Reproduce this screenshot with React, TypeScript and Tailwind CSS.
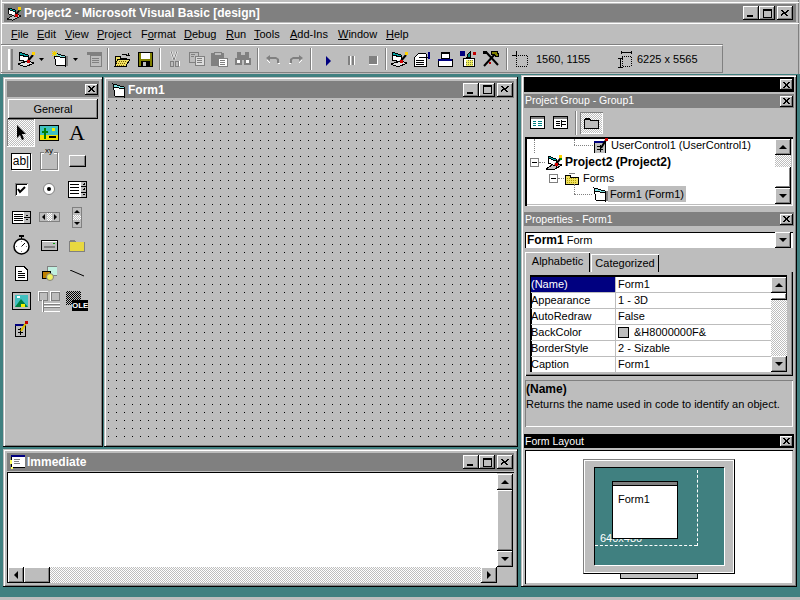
import React from "react";

const RAISED = "shadow-[inset_-1px_-1px_0_#000,inset_1px_1px_0_#fff,inset_-2px_-2px_0_#808080]";
const PANEL = "shadow-[inset_-1px_-1px_0_#000,inset_1px_1px_0_#bdbdbd,inset_2px_2px_0_#fff,inset_-2px_-2px_0_#808080]";
const FONT = "font-['Liberation_Sans',sans-serif]";

type P = { className?: string };
const Svg = ({ w, h, className, children, vw, vh }: { w: number; h: number; className?: string; children: React.ReactNode; vw?: number; vh?: number }) => (
  <svg width={w} height={h} viewBox={`0 0 ${vw ?? w} ${vh ?? h}`} shapeRendering="crispEdges" className={`shrink-0 block ${className ?? ""}`}>
    {children}
  </svg>
);

const Arrow = ({ d }: { d: "u" | "d" | "l" | "r" }) => {
  const pts = { u: "4,0 0,4 8,4", d: "0,0 8,0 4,4", l: "4,0 0,4 4,8", r: "0,0 4,4 0,8" }[d];
  const v = d === "u" || d === "d";
  return (
    <Svg w={v ? 8 : 4} h={v ? 4 : 8}>
      <polygon points={pts} fill="#000" shapeRendering="auto" />
    </Svg>
  );
};

const ScrollBtn = ({ d, className }: { d: "u" | "d" | "l" | "r"; className?: string }) => (
  <div className={`w-[16px] h-[16px] shrink-0 flex items-center justify-center bg-[#bdbdbd] ${RAISED} ${className ?? ""}`}>
    <Arrow d={d} />
  </div>
);

const XGlyph = () => (
  <Svg w={8} h={7}>
    <path d="M0 0h2v1h1v1h2v-1h1v-1h2v1h-1v1h-1v1h-1v1h1v1h1v1h-2v-1h-1v-1h-2v1h-1v1h-2v-1h1v-1h1v-1h1v-1h-1v-1h-1z" fill="#000" />
  </Svg>
);

const MiniX = ({ className }: P) => (
  <div className={`w-[13px] h-[11px] flex items-center justify-center bg-[#bdbdbd] shrink-0 ${RAISED} ${className ?? ""}`}>
    <Svg w={7} h={6}>
      <path d="M0 0h2v1h1v1h1v-1h1v-1h2v1h-1v1h-1v2h1v1h1v1h-2v-1h-1v-1h-1v1h-1v1h-2v-1h1v-1h1v-2h-1v-1h-1z" fill="#000" />
    </Svg>
  </div>
);

const Caption = () => (
  <div className="flex items-center shrink-0">
    <div className={`w-[16px] h-[14px] bg-[#bdbdbd] flex items-end pb-[3px] pl-[4px] ${RAISED}`}>
      <div className="w-[6px] h-[2px] bg-black" />
    </div>
    <div className={`w-[16px] h-[14px] bg-[#bdbdbd] flex items-center justify-center ${RAISED}`}>
      <div className="w-[9px] h-[9px] border border-black border-t-2" />
    </div>
    <div className={`w-[16px] h-[14px] ml-[2px] bg-[#bdbdbd] flex items-center justify-center ${RAISED}`}>
      <XGlyph />
    </div>
  </div>
);

/* ---------- drawn icons ---------- */
const ProjectIcon = ({ className, w = 18, h = 17 }: P & { w?: number; h?: number }) => (
  <Svg w={w} h={h} vw={18} vh={17} className={className}>
    <polygon points="1,15 8,16 17,11 10,9" fill="#c0c0c0" stroke="#000" />
    <polygon points="3,2 11,5 11,12 3,9" fill="#fff" stroke="#000" />
    <polygon points="3,2 11,5 11,7 3,4" fill="#00c0c0" stroke="#000" />
    <path d="M10 11l6-7" stroke="#000" strokeWidth="2" shapeRendering="auto" />
    <rect x="14" y="1" width="3" height="3" fill="#ffd000" />
    <rect x="10" y="9" width="3" height="3" fill="#d00000" />
    <rect x="15" y="4" width="2" height="2" fill="#008000" />
  </Svg>
);
const FormIcon = ({ className, sun }: P & { sun?: boolean }) => (
  <Svg w={16} h={16} className={className}>
    <rect x="13" y="5" width="3" height="10" fill="#808080" />
    <polygon points="2,2 13,5 13,15 4,14" fill="#fff" stroke="#000" />
    <polygon points="2,2 13,5 13,7 3,5" fill="#80e0e0" stroke="#000" />
    {sun && <path d="M2 0v5M0 2h5M0 0l5 5M5 0l-5 5" stroke="#f0d000" strokeWidth="1" />}
  </Svg>
);
const OpenIcon = ({ className }: P) => (
  <Svg w={17} h={15} className={className}>
    <path d="M1 4h5v2h6v8H1z" fill="#f0e060" stroke="#000" />
    <polygon points="1,14 4,7 16,7 12,14" fill="#f0e060" stroke="#000" />
    <path d="M2 10h2M5 9h8M4 11h7M3 13h7" stroke="#806000" strokeDasharray="1 1" />
    <path d="M8 2h3l2 0M14 1v3M12 3h4" stroke="#000" />
  </Svg>
);
const SaveIcon = ({ className }: P) => (
  <Svg w={15} h={15} className={className}>
    <rect x="0" y="0" width="15" height="15" fill="#000" />
    <rect x="1" y="1" width="13" height="13" fill="#808000" />
    <rect x="3" y="1" width="9" height="6" fill="#fff" />
    <rect x="3" y="9" width="9" height="5" fill="#000" />
    <rect x="5" y="10" width="3" height="4" fill="#bdbdbd" />
  </Svg>
);
const CutIcon = ({ className }: P) => (
  <Svg w={11} h={16} className={className}>
    <path d="M2 0l3 9M8 0l-3 9" stroke="#fff" strokeWidth="2" shapeRendering="auto" />
    <path d="M2 0l3 9M8 0l-3 9" stroke="#808080" shapeRendering="auto" />
    <rect x="1" y="10" width="3" height="5" fill="none" stroke="#808080" />
    <rect x="6" y="10" width="3" height="5" fill="none" stroke="#808080" />
    <path d="M10 10v5M5 16h5" stroke="#fff" />
  </Svg>
);
const CopyIcon = ({ className }: P) => (
  <Svg w={16} h={14} className={className}>
    <rect x="0" y="0" width="9" height="10" fill="#bdbdbd" stroke="#808080" />
    <rect x="6" y="4" width="9" height="9" fill="#dcdcdc" stroke="#808080" />
    <path d="M8 6h5M8 8h5M8 10h5M2 2h4M2 4h3" stroke="#808080" />
  </Svg>
);
const PasteIcon = ({ className }: P) => (
  <Svg w={17} h={15} className={className}>
    <rect x="0" y="1" width="13" height="13" fill="#808080" />
    <rect x="3" y="0" width="7" height="3" fill="#bdbdbd" stroke="#808080" />
    <rect x="7" y="6" width="9" height="8" fill="#fff" stroke="#808080" />
    <path d="M9 8h5M9 10h5M9 12h5" stroke="#808080" />
  </Svg>
);
const FindIcon = ({ className }: P) => (
  <Svg w={16} h={14} className={className}>
    <rect x="0" y="6" width="7" height="7" fill="#808080" />
    <rect x="9" y="6" width="7" height="7" fill="#808080" />
    <rect x="2" y="0" width="4" height="7" fill="#808080" />
    <rect x="10" y="0" width="4" height="7" fill="#808080" />
    <rect x="6" y="3" width="4" height="5" fill="#808080" />
    <rect x="2" y="8" width="3" height="3" fill="#fff" />
    <rect x="11" y="8" width="3" height="3" fill="#fff" />
  </Svg>
);
const UndoIcon = ({ className, flip }: P & { flip?: boolean }) => (
  <Svg w={14} h={9} className={`${flip ? "-scale-x-100" : ""} ${className ?? ""}`}>
    <path d="M0 3l4-3v2h6l3 2v4h-2v-3l-1-1H4v2z" fill="#808080" shapeRendering="auto" />
    <path d="M1 5l3 3M12 8h2" stroke="#fff" />
  </Svg>
);
const PlanIcon = ({ className }: P) => (
  <Svg w={18} h={17} className={className}>
    <polygon points="0,13 7,16 16,12 10,10" fill="#e0e0e0" stroke="#000" />
    <polygon points="1,1 10,4 10,11 1,9" fill="#fff" stroke="#000" />
    <polygon points="1,1 10,4 10,6 1,4" fill="#00a0a0" stroke="#000" />
    <path d="M9 11l6-7" stroke="#000" strokeWidth="2" shapeRendering="auto" />
    <rect x="14" y="1" width="3" height="3" fill="#ffd000" />
    <rect x="9" y="9" width="3" height="3" fill="#d00000" />
  </Svg>
);
const PropsIcon = ({ className }: P) => (
  <Svg w={16} h={15} className={className}>
    <polygon points="0,6 5,1 12,2 12,14 0,14" fill="#fff" stroke="#000" />
    <path d="M2 8h8M2 10h8M2 12h8" stroke="#000" />
    <path d="M5 5h9" stroke="#000" />
    <rect x="14" y="0" width="2" height="7" fill="#000080" />
  </Svg>
);
const LayoutIcon = ({ className }: P) => (
  <Svg w={15} h={15} className={className}>
    <rect x="3" y="0" width="8" height="6" fill="#fff" stroke="#000" />
    <rect x="3" y="0" width="8" height="2" fill="#000" />
    <rect x="0" y="7" width="14" height="7" fill="#fff" stroke="#000" />
    <rect x="0" y="7" width="14" height="2" fill="#000080" />
  </Svg>
);
const BrowserIcon = ({ className }: P) => (
  <Svg w={16} h={16} className={className}>
    <rect x="0" y="0" width="5" height="5" fill="#000080" />
    <rect x="13" y="1" width="3" height="3" fill="#c00000" />
    <polygon points="8,3 10,1 10,6 7,6" fill="#008080" stroke="#000" />
    <rect x="3" y="7" width="11" height="8" fill="#fff" stroke="#000" />
    <rect x="6" y="9" width="7" height="6" fill="#f0f060" />
    <path d="M6 11h7M6 13h7M8 9v6M10 9v6M12 9v6" stroke="#808040" strokeDasharray="1 1" />
  </Svg>
);
const ToolsIcon = ({ className }: P) => (
  <Svg w={16} h={16} className={className}>
    <path d="M1 15L12 3" stroke="#000" strokeWidth="2" shapeRendering="auto" />
    <path d="M3 1l12 13" stroke="#000" strokeWidth="2" shapeRendering="auto" />
    <polygon points="8,1 14,0 16,5 13,6 11,3 8,3" fill="#808000" stroke="#000" />
    <rect x="0" y="0" width="4" height="3" fill="#000" />
    <rect x="6" y="11" width="2" height="2" fill="#c00000" />
  </Svg>
);
const PosIcon = ({ className }: P) => (
  <Svg w={16} h={16} className={className}>
    <path d="M0 4h4M4 0v4" stroke="#000" />
    <rect x="4" y="4" width="11" height="11" fill="none" stroke="#000" strokeDasharray="1 1" />
  </Svg>
);
const SizeIcon = ({ className }: P) => (
  <Svg w={16} h={17} className={className}>
    <path d="M5 1h10M5 0v3M15 0v3M2 7h5M2 16h5M4 7v9" stroke="#000" />
    <rect x="6" y="5" width="9" height="10" fill="none" stroke="#000" strokeDasharray="1 1" />
  </Svg>
);
const Drop = ({ className }: P) => (
  <Svg w={5} h={3} className={className}>
    <polygon points="0,0 5,0 2.5,3" fill="#000" shapeRendering="auto" />
  </Svg>
);
const Sep = ({ className }: P) => <div className={`w-[2px] h-[22px] bg-[#808080] border-r border-white shrink-0 ${className ?? ""}`} />;

/* ---------- toolbox glyphs ---------- */
const tb = {
  pointer: (
    <Svg w={10} h={16}><polygon points="1,0 1,13 4,10 6,15 8,14 6,9 10,9" fill="#000" shapeRendering="auto" /></Svg>
  ),
  picture: (
    <Svg w={20} h={16}>
      <rect width="20" height="16" fill="#000" />
      <rect x="1" y="1" width="18" height="14" fill="#40c0c0" />
      <rect x="1" y="10" width="18" height="5" fill="#f0e000" />
      <rect x="5" y="3" width="2" height="11" fill="#008000" />
      <rect x="3" y="6" width="6" height="2" fill="#008000" />
      <rect x="13" y="3" width="3" height="3" fill="#f0f000" />
      <rect x="10" y="11" width="7" height="2" fill="#000" />
    </Svg>
  ),
  frame: (
    <div className="w-[18px] h-[18px] border border-[#808080] shadow-[1px_1px_0_#fff,inset_1px_1px_0_#fff] relative">
      <span className="absolute -top-[6px] left-[3px] text-[8px] leading-[8px] bg-[#bdbdbd] px-[1px] font-['Liberation_Sans',sans-serif]">xy</span>
    </div>
  ),
  command: <div className="w-[17px] h-[12px] bg-[#bdbdbd] border border-t-white border-l-white border-r-black border-b-black shadow-[inset_-1px_-1px_0_#808080]" />,
  check: (
    <Svg w={13} h={13}>
      <rect width="13" height="13" fill="#808080" />
      <rect x="1" y="1" width="12" height="12" fill="#fff" />
      <rect x="1" y="1" width="11" height="11" fill="#000" />
      <rect x="2" y="2" width="10" height="10" fill="#fff" />
      <path d="M3 6l2 3 5-5" stroke="#000" strokeWidth="2" fill="none" shapeRendering="auto" />
    </Svg>
  ),
  option: (
    <Svg w={12} h={12}>
      <circle cx="6" cy="6" r="5.5" fill="#fff" stroke="#808080" shapeRendering="auto" />
      <circle cx="6" cy="6" r="2" fill="#000" shapeRendering="auto" />
    </Svg>
  ),
  combo: (
    <Svg w={19} h={17}>
      <rect width="19" height="17" fill="#000" />
      <rect x="1" y="1" width="17" height="15" fill="#fff" />
      <path d="M2 3h9M2 6h9M2 9h9M2 12h9" stroke="#000" />
      <rect x="13" y="1" width="5" height="15" fill="#bdbdbd" />
      <path d="M15 3h2M15 8h2M15 13h2M16 2v1M16 7v2M16 13v1M13 5h5M13 11h5" stroke="#000" />
    </Svg>
  ),
  list: (
    <Svg w={19} h={13}>
      <rect width="19" height="13" fill="#000" />
      <rect x="1" y="1" width="17" height="11" fill="#fff" />
      <path d="M2 3h9M2 5h9M2 7h9M2 9h9" stroke="#000" />
      <rect x="12" y="1" width="6" height="11" fill="#bdbdbd" />
      <path d="M14 4h2M14 8h2M12 6h6" stroke="#000" />
    </Svg>
  ),
  hscroll: (
    <div className="flex h-[10px] w-[21px] border border-[#808080] bg-white shadow-[inset_1px_1px_0_#fff]">
      <div className="w-[7px] bg-[#bdbdbd] flex items-center justify-center"><div className="w-0 h-0 border-y-[3px] border-y-transparent border-r-[3px] border-r-black" /></div>
      <div className="flex-1 bg-[repeating-conic-gradient(#bdbdbd_0_25%,#fff_0_50%)] bg-[length:2px_2px]" />
      <div className="w-[7px] bg-[#bdbdbd] flex items-center justify-center"><div className="w-0 h-0 border-y-[3px] border-y-transparent border-l-[3px] border-l-black" /></div>
    </div>
  ),
  vscroll: (
    <div className="flex flex-col w-[10px] h-[21px] border border-[#808080] bg-white">
      <div className="h-[7px] bg-[#bdbdbd] flex items-center justify-center"><div className="w-0 h-0 border-x-[3px] border-x-transparent border-b-[3px] border-b-black" /></div>
      <div className="flex-1 bg-[repeating-conic-gradient(#bdbdbd_0_25%,#fff_0_50%)] bg-[length:2px_2px]" />
      <div className="h-[7px] bg-[#bdbdbd] flex items-center justify-center"><div className="w-0 h-0 border-x-[3px] border-x-transparent border-t-[3px] border-t-black" /></div>
    </div>
  ),
  timer: (
    <Svg w={17} h={20}>
      <rect x="6" y="0" width="5" height="2" fill="#000" />
      <rect x="8" y="2" width="1" height="2" fill="#000" />
      <circle cx="8.5" cy="11.5" r="7.5" fill="#fff" stroke="#000" strokeWidth="1.5" shapeRendering="auto" />
      <path d="M8.5 11.5L12 8" stroke="#000" shapeRendering="auto" />
      <path d="M8 6h1M3 11h1M13 11h1M8 16h1" stroke="#808080" />
    </Svg>
  ),
  drive: (
    <Svg w={17} h={11}>
      <rect width="17" height="11" fill="#000" />
      <rect x="1" y="1" width="15" height="9" fill="#bdbdbd" />
      <rect x="1" y="1" width="15" height="1" fill="#fff" />
      <rect x="3" y="6" width="11" height="2" fill="#808080" />
      <rect x="12" y="3" width="2" height="1" fill="#00a000" />
    </Svg>
  ),
  folder: (
    <Svg w={16} h={13}>
      <path d="M0 2h1v-1h5v1h1v1h9v10H0z" fill="#808080" />
      <rect x="1" y="3" width="14" height="9" fill="#e8d840" />
    </Svg>
  ),
  file: (
    <Svg w={13} h={15}>
      <path d="M0 0h9l4 4v11H0z" fill="#000" />
      <path d="M1 1h7l4 4v9H1z" fill="#fff" />
      <path d="M3 5h4M3 7h7M3 9h7M3 11h7" stroke="#000" />
    </Svg>
  ),
  shape: (
    <Svg w={15} h={15}>
      <rect x="5" y="0" width="10" height="9" fill="#c0f0e0" stroke="#808080" />
      <rect x="0" y="5" width="8" height="7" fill="#c08000" stroke="#000" />
      <circle cx="8" cy="11" r="3.5" fill="#f0f060" stroke="#808080" shapeRendering="auto" />
    </Svg>
  ),
  line: (
    <Svg w={15} h={7}>
      <path d="M0 0l14 6" stroke="#000" shapeRendering="auto" />
    </Svg>
  ),
  image: (
    <Svg w={19} h={18}>
      <rect width="19" height="18" fill="#000" />
      <rect x="1" y="1" width="17" height="16" fill="#bdbdbd" />
      <rect x="3" y="3" width="13" height="12" fill="#40c0c0" />
      <polygon points="3,15 9,7 16,15" fill="#008040" shapeRendering="auto" />
      <rect x="9" y="12" width="4" height="3" fill="#f0f000" />
      <rect x="5" y="4" width="3" height="2" fill="#fff" />
    </Svg>
  ),
  grid: (
    <Svg w={22} h={21}>
      <rect x="0" y="0" width="9" height="9" fill="#bdbdbd" stroke="#fff" />
      <rect x="1" y="1" width="8" height="8" fill="none" stroke="#808080" />
      <rect x="12" y="0" width="9" height="9" fill="#bdbdbd" stroke="#fff" />
      <rect x="13" y="1" width="8" height="8" fill="none" stroke="#808080" />
      <path d="M4 9v11M4 12h18M4 15h18M4 20h18" stroke="#fff" />
      <path d="M5 10v11M5 13h17M5 16h17M5 21h17" stroke="#808080" />
    </Svg>
  ),
  uc: (
    <Svg w={13} h={16}>
      <rect x="0" y="3" width="10" height="12" fill="#bdbdbd" stroke="#000" />
      <rect x="0" y="3" width="10" height="2" fill="#000080" />
      <path d="M3 8h5M3 11h5M5 7v7" stroke="#000" />
      <path d="M6 10l5-8" stroke="#e0c000" strokeWidth="2" shapeRendering="auto" />
      <rect x="10" y="0" width="3" height="3" fill="#c00000" />
    </Svg>
  ),
};

const TCell = ({ children, sel }: { children: React.ReactNode; sel?: boolean }) => (
  <div className={`w-[28px] h-[28px] flex items-center justify-center relative ${sel ? "bg-[repeating-conic-gradient(#bdbdbd_0_25%,#fff_0_50%)] bg-[length:2px_2px] shadow-[inset_-1px_-1px_0_#fff,inset_1px_1px_0_#808080]" : ""}`}>
    {children}
  </div>
);

const Toolbox = () => (
  <div className={`w-[100px] h-full bg-[#bdbdbd] p-[4px] shrink-0 flex flex-col ${PANEL}`}>
    <div className="h-[16px] bg-[#808080] flex items-center justify-end pr-[1px] shrink-0">
      <MiniX />
    </div>
    <div className={`h-[20px] mt-[2px] mx-[1px] flex items-center justify-center text-[11px] shrink-0 ${RAISED}`}>General</div>
    <div className="grid grid-cols-[28px_28px_28px] auto-rows-[28px]">
      <TCell sel>{tb.pointer}</TCell>
      <TCell>{tb.picture}</TCell>
      <TCell><span className="font-['Liberation_Serif',serif] text-[22px] leading-none">A</span></TCell>
      <TCell>
        <div className="w-[20px] h-[17px] bg-white border border-black shadow-[1px_1px_0_#fff] flex items-center justify-center text-[12px] leading-none">ab|</div>
      </TCell>
      <TCell>{tb.frame}</TCell>
      <TCell>{tb.command}</TCell>
      <TCell>{tb.check}</TCell>
      <TCell>{tb.option}</TCell>
      <TCell>{tb.combo}</TCell>
      <TCell>{tb.list}</TCell>
      <TCell>{tb.hscroll}</TCell>
      <TCell>{tb.vscroll}</TCell>
      <TCell>{tb.timer}</TCell>
      <TCell>{tb.drive}</TCell>
      <TCell>{tb.folder}</TCell>
      <TCell>{tb.file}</TCell>
      <TCell>{tb.shape}</TCell>
      <TCell>{tb.line}</TCell>
      <TCell>{tb.image}</TCell>
      <TCell>{tb.grid}</TCell>
      <TCell>
        <div className="relative w-[22px] h-[20px]">
          <div className="w-[15px] h-[14px] bg-[repeating-conic-gradient(#000_0_25%,#bdbdbd_0_50%)] bg-[length:2px_2px]" />
          <span className="absolute right-0 bottom-0 w-[16px] h-[11px] bg-black text-white font-['Liberation_Sans',sans-serif] font-bold text-[8px] leading-[11px] text-center">OLE</span>
        </div>
      </TCell>
      <TCell>{tb.uc}</TCell>
    </div>
  </div>
);

const FormWindow = () => (
  <div className={`flex-1 h-full bg-[#bdbdbd] p-[4px] flex flex-col ${PANEL}`}>
    <div className="h-[17px] bg-[#808080] flex items-center pl-[3px] pr-[1px] shrink-0">
      <FormIcon />
      <span className="ml-[1px] text-white font-bold text-[12px] flex-1">Form1</span>
      <Caption />
    </div>
    <div className="flex-1 bg-[linear-gradient(to_bottom,#bdbdbd_7px,transparent_7px),linear-gradient(to_right,#000_1px,#bdbdbd_1px)] bg-[length:8px_8px] bg-[position:0_3px]" />
  </div>
);

const Immediate = () => (
  <div className={`h-[138px] bg-[#bdbdbd] p-[4px] flex flex-col ${PANEL}`}>
    <div className="h-[18px] bg-[#808080] flex items-center pl-[3px] pr-[1px] shrink-0">
      <Svg w={15} h={15}>
        <rect x="1" y="0" width="14" height="12" fill="#fff" stroke="#000" />
        <rect x="1" y="0" width="14" height="2" fill="#000080" />
        <path d="M4 4h6M4 6h5M4 8h6" stroke="#808080" />
        <rect x="0" y="5" width="2" height="4" fill="#ffff60" />
        <rect x="1" y="12" width="2" height="2" fill="#ffff60" />
      </Svg>
      <span className="ml-[2px] text-white font-bold text-[12px] flex-1">Immediate</span>
      <Caption />
    </div>
    <div className="flex-1 mt-[1px] flex flex-col shadow-[inset_1px_1px_0_#000]">
      <div className="flex flex-1 min-h-0 pl-[1px] pt-[1px]">
        <div className="flex-1 bg-white" />
        <div className="w-[16px] flex flex-col pt-[1px] mr-[1px]">
          <ScrollBtn d="u" />
          <div className={`flex-1 ${RAISED}`} />
          <ScrollBtn d="d" />
        </div>
      </div>
      <div className="flex h-[16px] shrink-0 pl-[1px] pr-[1px]">
        <ScrollBtn d="l" />
        <div className={`w-[26px] shrink-0 ${RAISED}`} />
        <div className="flex-1 bg-[repeating-conic-gradient(#bdbdbd_0_25%,#fff_0_50%)] bg-[length:2px_2px]" />
        <ScrollBtn d="r" />
        <div className="w-[16px]" />
      </div>
    </div>
  </div>
);

const Box = ({ className }: P) => (
  <div className={`w-[9px] h-[9px] border border-[#808080] bg-white flex items-center justify-center shrink-0 ${className ?? ""}`}>
    <div className="w-[5px] h-[1px] bg-black" />
  </div>
);

const Tree = () => (
  <div className={`h-[69px] mx-[1px] flex bg-white shadow-[inset_2px_2px_0_#000,inset_-1px_-1px_0_#fff,inset_-2px_-2px_0_#bdbdbd] px-[2px] pb-[2px] overflow-hidden ${FONT}`}>
    <div className="flex-1 flex flex-col text-[11px] leading-[16px] min-w-0 overflow-hidden">
      <div className="h-[16px] flex items-center relative">
        <div className="absolute left-[7px] top-[2px] h-[14px] border-l border-dotted border-[#808080]" />
        <div className="absolute left-[47px] top-[2px] h-[6px] border-l border-dotted border-[#808080]" />
        <div className="ml-[47px] w-[19px] border-t border-dotted border-[#808080]" />
        <Svg w={15} h={15}>
          <rect x="1" y="3" width="11" height="12" fill="#bdbdbd" stroke="#000" />
          <rect x="1" y="3" width="11" height="2" fill="#000080" />
          <path d="M4 8h6M4 11h6M7 7v7" stroke="#000" />
          <path d="M8 10l5-8" stroke="#000" strokeWidth="2" shapeRendering="auto" />
          <rect x="12" y="0" width="3" height="3" fill="#c00000" />
        </Svg>
        <span className="ml-[3px] whitespace-nowrap">UserControl1 (UserControl1)</span>
      </div>
      <div className="h-[16px] flex items-center mt-[1px]">
        <Box className="ml-[3px]" />
        <div className="w-[6px] border-t border-dotted border-[#808080]" />
        <ProjectIcon />
        <span className="ml-[2px] font-bold whitespace-nowrap text-[12px]">Project2 (Project2)</span>
      </div>
      <div className="h-[16px] flex items-center">
        <Box className="ml-[22px]" />
        <div className="w-[6px] border-t border-dotted border-[#808080]" />
        <Svg w={16} h={13}>
          <path d="M1 3h5v2h8v7H1z" fill="#f0e060" stroke="#000" />
          <path d="M5 1h6" stroke="#808080" />
          <path d="M3 6h10M3 8h10M3 10h10" stroke="#b0a000" strokeDasharray="1 1" />
        </Svg>
        <span className="ml-[3px] whitespace-nowrap">Forms</span>
      </div>
      <div className="h-[16px] flex items-center relative">
        <div className="absolute left-[47px] -top-[2px] h-[10px] border-l border-dotted border-[#808080]" />
        <div className="ml-[47px] w-[18px] border-t border-dotted border-[#808080]" />
        <FormIcon />
        <span className="px-[2px] bg-[#bdbdbd] whitespace-nowrap">Form1 (Form1)</span>
      </div>
    </div>
    <div className="w-[16px] flex flex-col shrink-0 mt-[2px]">
      <ScrollBtn d="u" />
      <div className="h-[12px] bg-[repeating-conic-gradient(#bdbdbd_0_25%,#fff_0_50%)] bg-[length:2px_2px]" />
      <div className={`h-[21px] ${RAISED}`} />
      <ScrollBtn d="d" />
    </div>
  </div>
);

const rows: [string, React.ReactNode][] = [
  ["(Name)", "Form1"],
  ["Appearance", "1 - 3D"],
  ["AutoRedraw", "False"],
  [
    "BackColor",
    <span key="c" className="flex items-center">
      <span className="w-[11px] h-[11px] border border-black bg-[#bdbdbd] mr-[5px]" />&amp;H8000000F&amp;
    </span>,
  ],
  ["BorderStyle", "2 - Sizable"],
  ["Caption", "Form1"],
];

const Props = () => (
  <div className="h-[104px] mx-[1px] bg-[#bdbdbd] p-[3px] pl-[5px] pr-[6px] shadow-[inset_1px_0_0_#fff,inset_-1px_-1px_0_#000,inset_-2px_-2px_0_#808080]">
    <div className="h-[97px] flex bg-white shadow-[inset_2px_2px_0_#000] pl-[1px] pt-[2px] overflow-hidden">
      <div className="flex-1 flex flex-col min-w-0">
        {rows.map(([k, v], i) => (
          <div key={k} className="h-[16px] flex text-[11px] leading-[15px] shrink-0">
            <div className={`w-[85px] border-r border-b border-[#bdbdbd] ${i === 0 ? "bg-[#000080] text-white" : ""}`}>{k}</div>
            <div className="flex-1 border-b border-[#bdbdbd] pl-[2px]">{v}</div>
          </div>
        ))}
      </div>
      <div className="w-[16px] flex flex-col shrink-0">
        <ScrollBtn d="u" />
        <div className={`h-[7px] shrink-0 ${RAISED}`} />
        <div className="flex-1 bg-[repeating-conic-gradient(#bdbdbd_0_25%,#fff_0_50%)] bg-[length:2px_2px]" />
        <ScrollBtn d="d" />
      </div>
    </div>
  </div>
);

const Monitor = () => (
  <div className="flex flex-col items-center w-[152px]">
    <div className="w-[152px] h-[115px] bg-[#bdbdbd] border border-t-[#808080] border-l-[#808080] border-r-black border-b-black shadow-[inset_1px_1px_0_#fff,inset_-1px_-1px_0_#fff] px-[10px] py-[7px]">
      <div className="relative w-[130px] h-[98px] overflow-hidden bg-[#408080] border-t border-l border-[#000] shadow-[1px_1px_0_#fff]">
        <div className="absolute left-[0px] top-[77px] w-[102px] border-b border-dashed border-white" />
        <div className="absolute left-[102px] top-[2px] h-[76px] border-r border-dashed border-white" />
        <span className="absolute left-[5px] top-[63px] text-white text-[11px] leading-[14px]">640x480</span>
        <div className="absolute left-[17px] top-[13px] w-[66px] h-[58px] bg-white border border-black">
          <div className="h-[4px] bg-[#808080] border-b border-black" />
          <div className="pl-[5px] pt-[6px] text-[11px] leading-[14px]">Form1</div>
        </div>
      </div>
    </div>
    <div className="w-[78px] h-[5px] bg-[#bdbdbd] border-l border-r border-b border-black" />
  </div>
);

const RightColumn = () => (
  <div className={`w-[276px] h-[512px] shrink-0 bg-[#bdbdbd] px-[3px] pt-[2px] flex flex-col ${PANEL}`}>
    <div className="h-[15px] bg-black flex items-center justify-end pr-[1px] shrink-0"><MiniX /></div>
    <div className="h-[14px] mt-[2px] bg-[#808080] flex items-center pr-[1px] shrink-0">
      <span className="flex-1 pl-[1px] pb-[2px] text-white text-[10.5px] leading-none">Project Group - Group1</span>
      <MiniX />
    </div>
    <div className="h-[29px] flex items-center shrink-0 pl-[6px]">
      <Svg w={15} h={13}>
        <rect x="0" y="0" width="15" height="13" fill="#000" />
        <rect x="1" y="1" width="13" height="2" fill="#808080" />
        <rect x="1" y="3" width="13" height="9" fill="#fff" />
        <path d="M3 5h3M3 7h3M3 9h3M8 5h4M8 7h4M8 9h4" stroke="#008080" />
      </Svg>
      <Svg w={15} h={13} className="ml-[8px]">
        <rect x="0" y="0" width="15" height="13" fill="#000" />
        <rect x="1" y="1" width="13" height="2" fill="#808080" />
        <rect x="1" y="3" width="13" height="9" fill="#fff" />
        <path d="M3 5h4M3 7h4M3 9h4M9 5h4M9 8h4M8 4v7" stroke="#000" />
      </Svg>
      <Sep className="ml-[7px] h-[24px]" />
      <div className="ml-[3px] w-[23px] h-[22px] flex items-center justify-center bg-[repeating-conic-gradient(#bdbdbd_0_25%,#fff_0_50%)] bg-[length:2px_2px] shadow-[inset_1px_1px_0_#808080,inset_-1px_-1px_0_#fff]">
        <Svg w={15} h={12}>
          <path d="M0 2h1v-1h5v1h1v1h8v9H0z" fill="#000" />
          <path d="M1 3h5v1h8v7H1z" fill="#bdbdbd" />
        </Svg>
      </div>
    </div>
    <Tree />
    <div className="h-[14px] mt-[6px] bg-[#808080] flex items-center pr-[1px] shrink-0">
      <span className="flex-1 pl-[1px] text-white text-[10.5px] leading-none">Properties - Form1</span>
      <MiniX />
    </div>
    <div className="h-[16px] mt-[6px] mx-[1px] bg-white shadow-[inset_1px_1px_0_#000] flex items-center pl-[2px] pr-[2px] shrink-0">
      <span className="flex-1 text-[11px] leading-none pb-[1px]"><b className="text-[12px] mr-[3px]">Form1</b>Form</span>
      <ScrollBtn d="d" className="w-[15px] h-[14px]" />
    </div>
    <div className="h-[20px] mt-[4px] flex items-end text-[11px] shrink-0 pl-[1px]">
      <div className="w-[65px] h-[20px] pb-[2px] flex items-center justify-center bg-[#bdbdbd] shadow-[inset_1px_1px_0_#fff,inset_-1px_0_0_#000]">Alphabetic</div>
      <div className="w-[68px] h-[18px] ml-[1px] flex items-center justify-center shadow-[inset_1px_1px_0_#fff,inset_-1px_0_0_#000,0_1px_0_#fff]">Categorized</div>
    </div>
    <Props />
    <div className="h-[47px] mt-[4px] mx-[1px] shadow-[inset_1px_1px_0_#808080,inset_-1px_-1px_0_#fff] px-[1px] pt-[2px] text-[11px] leading-[15px] shrink-0">
      <div className="font-bold text-[12px]">(Name)</div>
      <div className="whitespace-nowrap">Returns the name used in code to identify an object.</div>
    </div>
    <div className="h-[14px] mt-[7px] bg-black flex items-center pr-[1px] shrink-0">
      <span className="flex-1 pl-[1px] text-white text-[10.5px] leading-none">Form Layout</span>
      <MiniX />
    </div>
    <div className="h-[134px] mt-[2px] bg-white mx-[1px] shadow-[inset_1px_1px_0_#000,inset_-1px_-1px_0_#bdbdbd] pl-[58px] pt-[9px]">
      <Monitor />
    </div>
  </div>
);

const menus: [React.ReactNode, string][] = [
  [<><u>F</u>ile</>, "w-[26px]"],
  [<><u>E</u>dit</>, "w-[28px]"],
  [<><u>V</u>iew</>, "w-[32px]"],
  [<><u>P</u>roject</>, "w-[44px]"],
  [<>F<u>o</u>rmat</>, "w-[43px]"],
  [<><u>D</u>ebug</>, "w-[42px]"],
  [<><u>R</u>un</>, "w-[28px]"],
  [<><u>T</u>ools</>, "w-[36px]"],
  [<><u>A</u>dd-Ins</>, "w-[48px]"],
  [<><u>W</u>indow</>, "w-[48px]"],
  [<><u>H</u>elp</>, "w-[40px]"],
];

export default function App() {
  return (
    <div className={`w-[800px] h-[600px] bg-[#bdbdbd] overflow-hidden flex flex-col text-black ${FONT}`}>
      <div className="h-[74px] shrink-0 flex flex-col mx-[1px] shadow-[inset_1px_0_0_#fff,inset_-1px_0_0_#808080]">
        <div className="h-[2px] shrink-0" />
        <div className="h-[2px] shrink-0 border-t border-white" />
        <div className="h-[18px] mx-[3px] bg-[#808080] flex items-center shrink-0 pr-[3px] pl-[2px]">
          <ProjectIcon w={16} h={15} />
          <span className="ml-[2px] flex-1 text-white font-bold text-[12px] leading-none">
            Project2 - Microsoft Visual Basic [design]
          </span>
          <Caption />
        </div>
        <div className="h-[2px] shrink-0 border-b border-white" />
        <div className="h-[21px] shrink-0 flex items-center pl-[10px] text-[11px]">
          {menus.map(([m, w], i) => (
            <span key={i} className={w}>{m}</span>
          ))}
        </div>
        <div className="h-[29px] shrink-0 flex">
          <div className="w-[722px] h-[28px] flex items-center border-t border-white shadow-[0_-1px_0_#808080] border-b border-b-[#808080] border-r border-r-[#808080] text-[11px]">
            <div className="ml-[7px] w-[5px] h-[21px] border-x-2 border-x-[#808080] border-l-white shrink-0" />
            <PlanIcon className="ml-[5px]" />
            <Drop className="ml-[3px]" />
            <FormIcon sun className="ml-[8px]" />
            <Drop className="ml-[5px]" />
            <Svg w={16} h={15} className="ml-[8px]">
              <rect x="1" y="0" width="15" height="3" fill="#808080" />
              <rect x="4" y="3" width="11" height="11" fill="#bdbdbd" stroke="#808080" />
              <path d="M6 6h7M6 8h7M6 10h7" stroke="#808080" />
            </Svg>
            <Sep className="ml-[5px]" />
            <OpenIcon className="ml-[5px]" />
            <SaveIcon className="ml-[7px]" />
            <Sep className="ml-[6px]" />
            <CutIcon className="ml-[8px]" />
            <CopyIcon className="ml-[9px]" />
            <PasteIcon className="ml-[6px]" />
            <FindIcon className="ml-[7px]" />
            <Sep className="ml-[6px]" />
            <UndoIcon className="ml-[7px]" />
            <UndoIcon flip className="ml-[9px]" />
            <Sep className="ml-[7px]" />
            <Svg w={9} h={10} className="ml-[13px] mt-[3px]"><polygon points="1,0 6,5 1,10" fill="#000080" shapeRendering="auto" /></Svg>
            <Svg w={7} h={9} className="ml-[14px] mt-[3px]">
              <rect x="0" width="2" height="9" fill="#808080" />
              <rect x="2" width="1" height="9" fill="#fff" />
              <rect x="4" width="2" height="9" fill="#808080" />
              <rect x="6" width="1" height="9" fill="#fff" />
            </Svg>
            <Svg w={9} h={9} className="ml-[14px] mt-[3px]">
              <rect width="9" height="9" fill="#fff" />
              <rect width="8" height="8" fill="#808080" />
            </Svg>
            <Sep className="ml-[7px]" />
            <PlanIcon className="ml-[4px]" />
            <PropsIcon className="ml-[5px]" />
            <LayoutIcon className="ml-[8px]" />
            <BrowserIcon className="ml-[7px]" />
            <ToolsIcon className="ml-[7px]" />
            <Sep className="ml-[7px]" />
            <PosIcon className="ml-[4px]" />
            <span className="ml-[8px] w-[80px]">1560, 1155</span>
            <SizeIcon />
            <span className="ml-[5px]">6225 x 5565</span>
          </div>
        </div>
      </div>
      <div className="h-[523px] shrink-0 flex pl-[3px] pt-[1px] bg-[#408080]">
        <div className="w-[515px] shrink-0 flex flex-col pt-[2px] gap-[2px] h-[513px]">
          <div className="h-[370px] flex gap-[1px] shrink-0">
            <Toolbox />
            <FormWindow />
          </div>
          <Immediate />
        </div>
        <div className="ml-[3px]"><RightColumn /></div>
      </div>
    </div>
  );
}
